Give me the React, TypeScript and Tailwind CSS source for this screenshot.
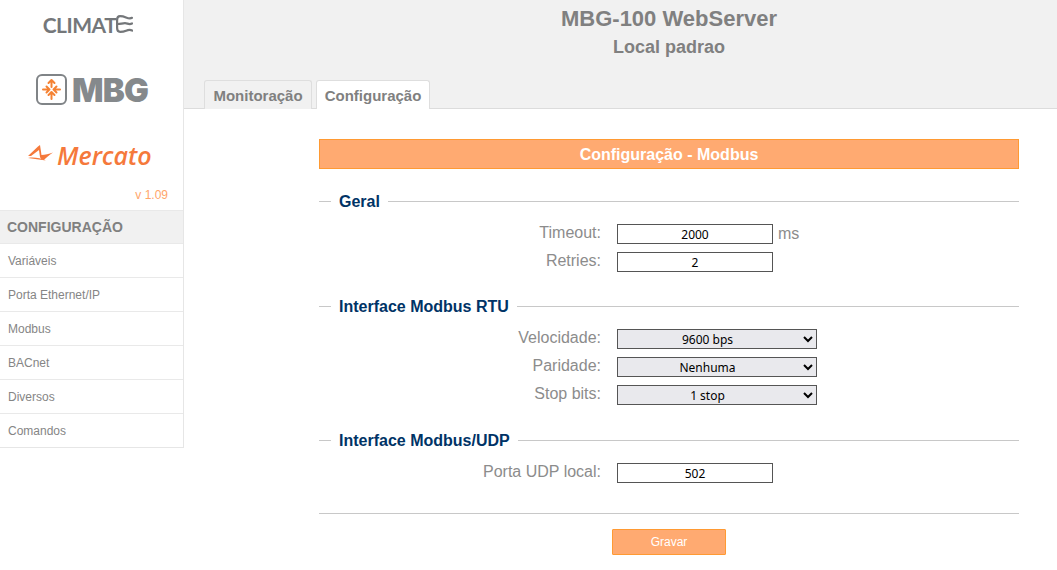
const font = { fontFamily: '"Liberation Sans", Arial, sans-serif' };

const menuItems = ["Variáveis", "Porta Ethernet/IP", "Modbus", "BACnet", "Diversos", "Comandos"];

function ClimateWaves() {
  return (
    <svg className="h-[18px] w-[17px]" viewBox="0 0 17 18" fill="none" stroke="#74777a" strokeWidth="2.200" strokeLinecap="round" aria-hidden="true">
      <path d="M16 2.800c-2 1.200-4 .4-6-.4S6 1.200 4 1.200 1.100 2.500 1.100 5v8c0 2.500 1 3.800 3 3.800s4-.3 6-1.100 4-1.200 6-.2" />
      <path d="M1.500 9c3 0 5-.8 7.500-.8s4 1.800 7 .3" />
    </svg>
  );
}

function MbgMark() {
  return (
    <svg className="h-[31px] w-[31px]" viewBox="0 0 31 31" fill="none" aria-hidden="true">
      <rect x="1" y="1" width="29" height="29" rx="5" stroke="#808487" strokeWidth="2" />
      <g stroke="#f58233" strokeWidth="2" strokeLinecap="round" strokeLinejoin="round">
        <path d="M15.500 6v7M12.500 9l3-3 3 3" />
        <path d="M15.500 18v7M12.500 21l3-3 3 3" />
        <path d="M7 15.500h6.500M10.500 12.500l3 3-3 3" />
        <path d="M24 15.500h-6.500M20.500 12.500l-3 3 3 3" />
      </g>
    </svg>
  );
}

function MercatoSwoosh() {
  return (
    <svg className="h-[20px] w-[25px]" viewBox="0 0 25 20" fill="#f5793b" aria-hidden="true">
      <path d="M0 11 10 1.500 12 0l1.500 10c3.500 0 7.500-1 11.500-2.500-4 2.500-7 5.500-9 7.500-2 0-3.500-1-4-3l-1-7L3 11z" />
      <path d="M0 13c6-1 12 0 18 2.500-6-1-12-1.500-18-2.500z" />
    </svg>
  );
}

function Sidebar() {
  return (
    <aside className="flex h-[448px] w-[184px] shrink-0 flex-col border-r border-b border-[#e6e6e6]">
      <div className="flex h-[48px] items-center justify-center pr-[7px] text-[#74777a]">
        <span className="text-[21px] leading-none font-bold tracking-[-0.5px]" style={{ fontFamily: "Lato, sans-serif" }}>CLIMAT</span>
        <ClimateWaves />
      </div>
      <div className="mt-[26px] flex h-[31px] items-center gap-[5px] pl-[36px]">
        <MbgMark />
        <span className="pt-[2px] text-[33px] leading-none font-black tracking-[-0.8px] text-[#85898c]" style={{ fontFamily: "Inter, sans-serif" }}>MBG</span>
      </div>
      <div className="mt-[37px] flex h-[26px] items-center gap-[4px] pl-[28px]">
        <MercatoSwoosh />
        <span className="pt-[1px] text-[25px] leading-none font-semibold text-[#f5793b] italic" style={{ fontFamily: '"Open Sans", sans-serif' }}>Mercato</span>
      </div>
      <div className="mt-[17px] pr-[15px] text-right text-[12px] leading-[20px] text-[#ffa66b]" style={font}>v 1.09</div>
      <div className="mt-[5px] flex h-[34px] shrink-0 items-center border-y border-[#e9e9e9] bg-[#f1f1f1] pl-[7px] text-[14px] font-bold text-[#808080]" style={font}>
        CONFIGURAÇÃO
      </div>
      {menuItems.map((item) => (
        <div key={item} className="flex h-[34px] shrink-0 items-center border-b border-[#e9e9e9] pl-[8px] text-[12px] text-[#858585] last:h-[33px] last:border-b-0" style={font}>
          {item}
        </div>
      ))}
    </aside>
  );
}

function SectionTitle({ title }: { title: string }) {
  return (
    <div className="flex h-[20px] items-center">
      <span className="h-px w-[12px] bg-[#c8c8c8]" />
      <h2 className="px-[8px] pt-[1px] text-[16px] leading-[20px] font-bold text-[#003366]">{title}</h2>
      <span className="h-px flex-1 bg-[#c8c8c8]" />
    </div>
  );
}

function Row({ label, children }: { label: string; children: React.ReactNode }) {
  return (
    <div className="flex h-[28px] items-center">
      <label className="w-[282px] pb-[3px] text-right text-[16px] text-[#8c8c8c]">{label}</label>
      <div className="ml-[16px] flex items-center">{children}</div>
    </div>
  );
}

function TextField({ value }: { value: string }) {
  return (
    <input
      readOnly
      value={value}
      className="h-[20px] w-[156px] border border-[#555] bg-white text-center text-[12px] text-black"
      style={{ fontFamily: '"Noto Sans", sans-serif' }}
    />
  );
}

function SelectField({ value }: { value: string }) {
  return (
    <select
      value={value}
      onChange={() => {}}
      className="h-[20px] w-[200px] border border-[#555] bg-[#e9e9ed] pr-[7px] text-[12px] text-black [text-align-last:center]"
      style={{ fontFamily: '"Noto Sans", sans-serif' }}
    >
      <option>{value}</option>
    </select>
  );
}

export default function App() {
  return (
    <div className="flex h-[570px] w-[1057px] overflow-hidden bg-white" style={font}>
      <Sidebar />
      <main className="flex min-w-0 flex-1 flex-col">
        <header className="h-[109px] border-b border-[#dcdcdc] bg-[#f1f1f1]">
          <div className="ml-[135px] w-[700px] pt-[6px] text-center font-bold text-[#808080]">
            <h1 className="text-[22px] leading-[26px]">MBG-100 WebServer</h1>
            <p className="mt-[5px] text-[18px] leading-[20px]">Local padrao</p>
          </div>
          <div className="mt-[23px] flex gap-[4px] pl-[20px]">
            <div className="flex h-[29px] w-[108px] items-center justify-center rounded-t-[3px] border border-b-0 border-[#dedede] bg-[#f1f1f1] pt-[3px] text-[15px] font-bold text-[#808080]">
              Monitoração
            </div>
            <div className="flex h-[29px] w-[114px] items-center justify-center rounded-t-[3px] border border-b-0 border-[#dedede] bg-white pt-[3px] text-[15px] font-bold text-[#808080]">
              Configuração
            </div>
          </div>
        </header>
        <div className="ml-[135px] w-[700px] pt-[30px]">
          <div className="flex h-[30px] items-center justify-center border border-[#ff9a33] bg-[#ffaa71] pt-[1px] text-[16px] font-bold text-white">
            Configuração - Modbus
          </div>
          <section className="mt-[22px]">
            <SectionTitle title="Geral" />
            <div className="mt-[9px]">
              <Row label="Timeout:">
                <TextField value="2000" />
                <span className="ml-[5px] text-[16px] text-[#8c8c8c]">ms</span>
              </Row>
              <Row label="Retries:">
                <TextField value="2" />
              </Row>
            </div>
          </section>
          <section className="mt-[20px]">
            <SectionTitle title="Interface Modbus RTU" />
            <div className="mt-[9px]">
              <Row label="Velocidade:"><SelectField value="9600 bps" /></Row>
              <Row label="Paridade:"><SelectField value="Nenhuma" /></Row>
              <Row label="Stop bits:"><SelectField value="1 stop" /></Row>
            </div>
          </section>
          <section className="mt-[21px]">
            <SectionTitle title="Interface Modbus/UDP" />
            <div className="mt-[9px]">
              <Row label="Porta UDP local:"><TextField value="502" /></Row>
            </div>
          </section>
          <div className="mt-[26px] border-t border-[#c8c8c8]" />
          <div className="mt-[15px] flex justify-center">
            <button className="h-[26px] w-[114px] rounded-[1px] border border-[#ff9a33] bg-[#ffaa71] text-[12px] text-white">Gravar</button>
          </div>
        </div>
      </main>
    </div>
  );
}
